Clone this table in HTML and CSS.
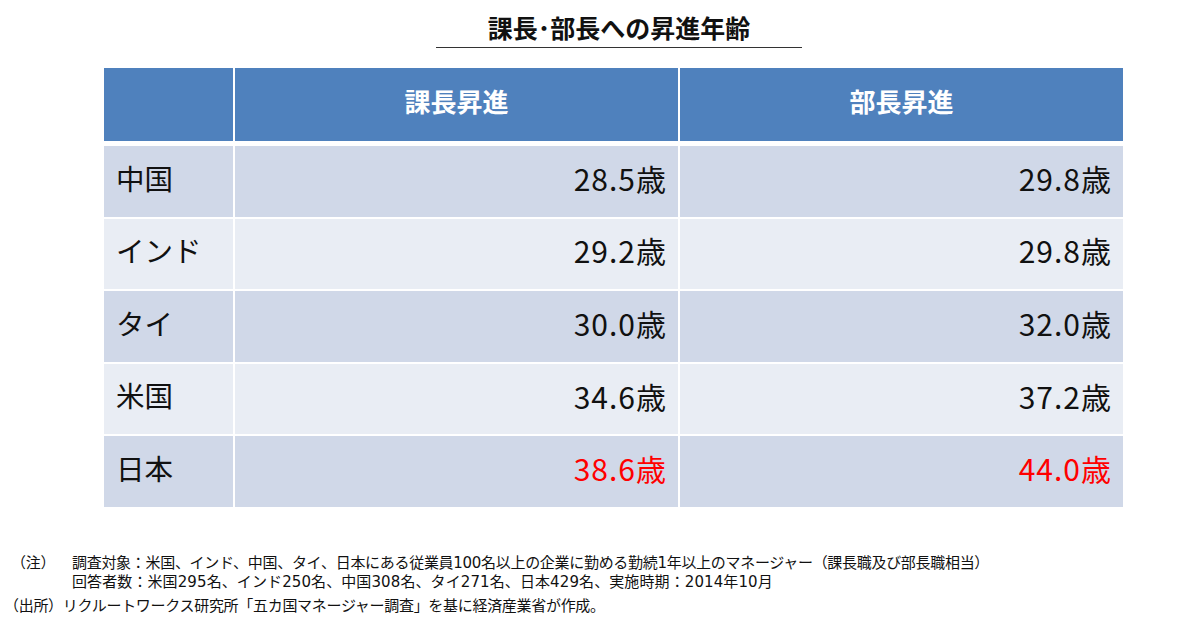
FILE: index.html
```html
<!DOCTYPE html>
<html lang="ja">
<head>
<meta charset="utf-8">
<link rel="stylesheet" href="styles.css">
</head>
<body>
<div class="page">
  <h1 class="title">課長･部長への昇進年齢</h1>
  <div class="table">
    <div class="cell head"></div>
    <div class="cell head center">課長昇進</div>
    <div class="cell head center">部長昇進</div>

    <div class="cell odd label">中国</div>
    <div class="cell odd num">28.5歳</div>
    <div class="cell odd num">29.8歳</div>

    <div class="cell even label">インド</div>
    <div class="cell even num">29.2歳</div>
    <div class="cell even num">29.8歳</div>

    <div class="cell odd label">タイ</div>
    <div class="cell odd num">30.0歳</div>
    <div class="cell odd num">32.0歳</div>

    <div class="cell even label">米国</div>
    <div class="cell even num">34.6歳</div>
    <div class="cell even num">37.2歳</div>

    <div class="cell odd label">日本</div>
    <div class="cell odd num red">38.6歳</div>
    <div class="cell odd num red">44.0歳</div>
  </div>
  <div class="notes">
    <div class="note">
      <span class="mark">（注）</span>
      <div class="note-body">
        <div class="line-target">調査対象：米国、インド、中国、タイ、日本にある従業員100名以上の企業に勤める勤続1年以上のマネージャー（課長職及び部長職相当）</div>
        <div class="line-count">回答者数：米国295名、インド250名、中国308名、タイ271名、日本429名、実施時期：2014年10月</div>
      </div>
    </div>
    <div class="source">（出所）リクルートワークス研究所「五カ国マネージャー調査」を基に経済産業省が作成。</div>
  </div>
</div>
</body>
</html>
```

FILE: styles.css
```css
* { box-sizing: border-box; }
html, body { margin: 0; padding: 0; background: #ffffff; }
body {
  font-family: "Noto Sans CJK JP", "Noto Sans", sans-serif;
  color: #111111;
}
.page {
  width: 1200px;
  height: 618px;
  overflow: hidden;
  padding-top: 10px;
}
.title {
  margin: 0 0 0 436px;
  width: 366px;
  text-align: center;
  font-size: 25px;
  font-weight: 700;
  line-height: 34px;
  padding-bottom: 3px;
  border-bottom: 1.5px solid #333333;
}
.table {
  margin: 20px 0 0 104px;
  width: 1019px;
  display: grid;
  grid-template-columns: 129px 443px 443px;
  grid-template-rows: 76px repeat(5, 70.6px);
  column-gap: 2px;
  row-gap: 2px;
}
.cell {
  display: flex;
  align-items: center;
  line-height: 1;
  padding-bottom: 7px;
}
.head {
  background: #4f81bd;
  color: #ffffff;
  font-weight: 700;
  font-size: 26px;
  margin-bottom: 3px;
}
.center { justify-content: center; }
.odd { background: #d0d8e8; }
.even { background: #e9edf4; }
.label { padding-left: 12px; font-size: 28.5px; }
.num {
  justify-content: flex-end;
  padding-right: 11px;
  font-size: 30px;
  letter-spacing: 1px;
}
.red { color: #ff0000; }
.notes {
  margin-top: 47px;
  font-family: "DejaVu Sans", "Noto Sans CJK JP", sans-serif;
  font-size: 15px;
  line-height: 19px;
  color: #111111;
  letter-spacing: -0.3px;
}
.note {
  display: flex;
  padding-left: 11px;
}
.mark { width: 61px; flex: none; }
.line-count { letter-spacing: 0.1px; }
.source {
  margin-top: 5px;
  padding-left: 4px;
}
```
